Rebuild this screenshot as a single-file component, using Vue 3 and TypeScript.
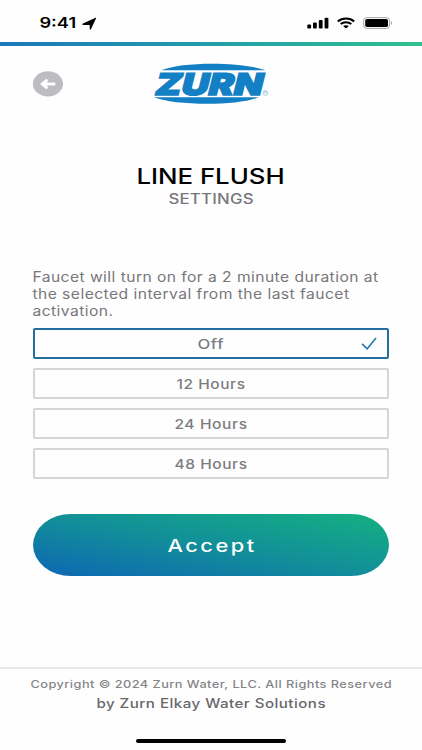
<script setup lang="ts">
import { h, ref, type FunctionalComponent } from 'vue'

interface WideTextProps {
  text: string
  width: number
  size: number
  weight?: number
  spacing?: number
}

// A single line of text, fitted to a given width in the wide brand style.
const WideText: FunctionalComponent<WideTextProps> = (props) => {
  const height = Math.round(props.size * 1.2)
  return h('svg', { width: props.width, height, overflow: 'visible' }, [
    h(
      'text',
      {
        x: -0.6,
        y: height - props.size * 0.24,
        'font-size': props.size,
        'font-weight': props.weight ?? 400,
        'letter-spacing': props.spacing ?? 0,
        textLength: props.width + 0.2 + (props.spacing ?? 0),
        lengthAdjust: 'spacingAndGlyphs',
        fill: 'currentColor',
      },
      props.text,
    ),
  ])
}
WideText.props = ['text', 'width', 'size', 'weight', 'spacing']

const description = [
  { text: 'Faucet will turn on for a 2 minute duration at', width: 345.5 },
  { text: 'the selected interval from the last faucet', width: 316.5 },
  { text: 'activation.', width: 80.5 },
]

const options = [
  { text: 'Off', width: 26 },
  { text: '12 Hours', width: 68.5 },
  { text: '24 Hours', width: 72.5 },
  { text: '48 Hours', width: 72.5 },
]
const selected = ref('Off')
</script>

<template>
  <div class="screen">
    <div class="status">
      <div class="time">
        <WideText text="9:41" :width="36.5" :size="15" :weight="580" />
        <svg class="locate" width="15" height="12" viewBox="0 0 15 12">
          <path d="M.9 5.6 13-.1c.8-.3 1.3.1.9.8L8.9 11.3c-.4.7-1.2.6-1.2-.2V7.4c0-.3-.1-.4-.4-.4H1.1C.1 7 .1 6 .9 5.6Z" />
        </svg>
      </div>
      <div class="signals">
        <svg width="22" height="12" viewBox="0 0 22 12">
          <rect x=".3" y="7.4" width="3.8" height="4.1" rx="1" />
          <rect x="6" y="5.4" width="3.8" height="6.1" rx="1" />
          <rect x="11.8" y="3.1" width="3.8" height="8.4" rx="1" />
          <rect x="17.6" y=".7" width="3.8" height="10.8" rx="1" />
        </svg>
        <svg width="18" height="12" viewBox="0 0 18 12">
          <g fill="none" stroke="#000" stroke-width="2">
            <path d="M.8 4.4C5.3.4 12.7.4 17.2 4.4" />
            <path d="M3.7 7.1c3-2.6 7.6-2.6 10.6 0" />
          </g>
          <path d="M6.1 9.1c1.7-1.3 4.1-1.3 5.8 0L9 11.6Z" />
        </svg>
        <svg width="30" height="12" viewBox="0 0 30 12">
          <rect x=".6" y=".6" width="26" height="10.8" rx="3.2" fill="none" stroke="#a3a3a3" />
          <rect x="2.2" y="2" width="22.8" height="8" rx="1.8" />
          <path d="M28 4.1c1.6.7 1.6 3.1 0 3.8Z" fill="#a3a3a3" />
        </svg>
      </div>
    </div>
    <div class="stripe"></div>

    <header class="header">
      <button class="back" aria-label="Back">
        <svg width="30" height="26" viewBox="0 0 30 26">
          <ellipse cx="15" cy="12.9" rx="15.1" ry="12.6" fill="#bdbcc0" />
          <path d="M12 13h10.3" fill="none" stroke="#fff" stroke-width="2.8" />
          <path d="m7 13 6.2-5.3 1.8 1.4-1.2 3.9 1.2 3.9-1.8 1.4Z" fill="#fff" />
        </svg>
      </button>
      <svg class="logo" width="116" height="42" viewBox="0 0 116 42">
        <path d="M8.5 7.2C29-1.4 88-1.4 112.5 7.2Z" />
        <path d="M1 34.3h104.5C86 43 22 43 1 34.3Z" />
        <text class="brand" x="0" y="31.6" textLength="107.5" lengthAdjust="spacingAndGlyphs" transform="translate(8.4 0) skewX(-14)">ZURN</text>
        <circle cx="112.4" cy="30" r="2.4" fill="none" stroke="#6fadd6" stroke-width=".6" />
        <text class="mark" x="111.1" y="31.4">R</text>
      </svg>
    </header>

    <div class="heading">
      <WideText class="title" text="LINE FLUSH" :width="148" :size="21.4" :weight="530" />
      <WideText class="subtitle" text="SETTINGS" :width="85" :size="14.2" :weight="500" :spacing="0.2" />
    </div>

    <main class="content">
      <div class="description">
        <WideText v-for="line in description" :key="line.text" :text="line.text" :width="line.width" :size="13.8" :spacing="0.4" />
      </div>
      <div class="options">
        <button
          v-for="option in options"
          :key="option.text"
          class="option"
          :class="{ selected: selected === option.text }"
          @click="selected = option.text"
        >
          <WideText :text="option.text" :width="option.width" :size="13.2" :weight="530" :spacing="0.5" />
          <svg v-if="selected === option.text" class="check" width="16" height="13" viewBox="0 0 16 13">
            <path d="m1 6.8 5.2 5L15 1" />
          </svg>
        </button>
      </div>
      <button class="accept">
        <WideText text="Accept" :width="87" :size="17.5" :weight="540" :spacing="2" />
      </button>
    </main>

    <footer class="footer">
      <WideText class="copyright" text="Copyright © 2024 Zurn Water, LLC. All Rights Reserved" :width="361" :size="10.8" :weight="480" :spacing="0.4" />
      <WideText class="company" text="by Zurn Elkay Water Solutions" :width="229" :size="12.8" :weight="540" :spacing="0.4" />
      <div class="home"></div>
    </footer>
  </div>
</template>

<style>
body {
  background: #fefefe;
}
</style>

<style scoped>
.screen {
  display: flex;
  flex-direction: column;
  box-sizing: border-box;
  width: 100%;
  height: 750px;
  overflow: hidden;
  background: #fefefe;
  font-family: Inter, 'Liberation Sans', sans-serif;
  color: #77777b;
}
svg {
  display: block;
  flex: none;
}
button {
  padding: 0;
  font: inherit;
  color: inherit;
  background: none;
  border: 0;
}
.status {
  display: flex;
  justify-content: space-between;
  height: 42px;
  padding: 0 29px 0 40px;
  box-sizing: border-box;
  color: #000;
}
.time {
  display: flex;
  gap: 5.5px;
  padding-top: 14px;
}
.locate {
  margin-top: 4px;
  overflow: visible;
}
.signals {
  display: flex;
  gap: 8px;
  padding-top: 17px;
}
.stripe {
  flex: none;
  height: 4px;
  background: linear-gradient(90deg, #1b78b9, #229eaa 50%, #30c08f);
}
.header {
  display: flex;
  align-items: flex-start;
  height: 116px;
  padding: 17px 33px 0;
  box-sizing: border-box;
}
.back {
  margin-top: 8px;
}
.logo {
  margin-left: 90px;
  overflow: visible;
  fill: #137fc4;
}
.brand {
  font-size: 30px;
  font-weight: 900;
  stroke: #137fc4;
  stroke-width: 1.5px;
}
.mark {
  font-size: 4px;
  fill: #6fadd6;
}
.heading {
  display: flex;
  flex-direction: column;
  align-items: center;
  height: 106px;
}
.title {
  margin-top: 1px;
  color: #000;
}
.subtitle {
  margin-top: 1px;
}
.content {
  display: flex;
  flex-direction: column;
  height: 399px;
  padding: 0 33px;
}
.description {
  display: flex;
  flex-direction: column;
  height: 60px;
}
.options {
  display: flex;
  flex-direction: column;
  gap: 9px;
}
.option {
  display: flex;
  position: relative;
  align-items: center;
  justify-content: center;
  height: 31px;
  border: 2px solid #d5d5da;
  border-radius: 2px;
  color: #7c7c80;
}
.option.selected {
  border-color: #256f9f;
}
.check {
  position: absolute;
  right: 10px;
  fill: none;
  stroke: #2878ae;
  stroke-width: 1.6;
}
.accept {
  display: flex;
  align-items: center;
  justify-content: center;
  height: 62px;
  margin-top: 35px;
  border-radius: 38px / 31px;
  background: linear-gradient(to top right, #0d67b3, #128f99 50%, #14b081);
  color: #fff;
}
.footer {
  display: flex;
  flex-direction: column;
  align-items: center;
  height: 83px;
  border-top: 2px solid #e7e7e7;
  box-sizing: border-box;
}
.copyright {
  margin-top: 9px;
  color: #858588;
}
.company {
  margin-top: 5px;
  color: #67676b;
}
.home {
  width: 150px;
  height: 4px;
  margin-top: 28px;
  border-radius: 2px;
  background: #000;
}
</style>
